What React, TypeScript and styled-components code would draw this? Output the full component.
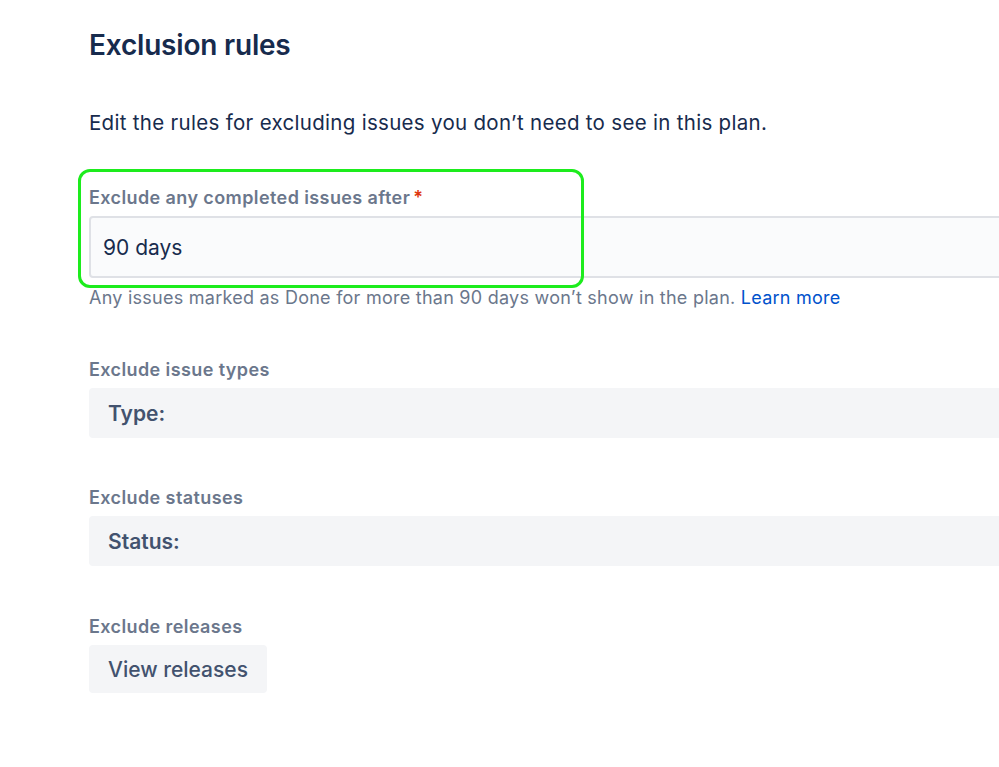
import { FunctionComponent } from "react";
import styled, { createGlobalStyle } from "styled-components";

const GlobalStyle = createGlobalStyle`
  html, body {
    margin: 0;
    padding: 0;
    background: #ffffff;
    overflow: hidden;
  }

  body {
    font-family: Inter, "Noto Sans", "Liberation Sans", sans-serif;
    -webkit-font-smoothing: antialiased;
  }
`;

const Page = styled.div`
  display: flex;
  flex-direction: column;

  width: 1100px;
  padding: 29px 0 0 89px;
`;

const Title = styled.h1`
  margin: 0;

  color: #172b4d;
  font-size: 28px;
  font-weight: 600;
  line-height: 32px;
  letter-spacing: -0.2px;
`;

const Description = styled.p`
  margin: 50px 0 0;

  color: #172b4d;
  font-size: 20.5px;
  line-height: 24px;
  letter-spacing: 0.3px;
`;

const Field = styled.div<{ $gap: number }>`
  position: relative;

  display: flex;
  flex-direction: column;
  gap: 8px;

  margin-top: ${(p) => p.$gap}px;
`;

const Label = styled.label`
  color: #6b778c;
  font-size: 18px;
  font-weight: 600;
  line-height: 20px;
  letter-spacing: 0.4px;
`;

const Required = styled.span`
  margin-left: 3px;

  color: #de350b;
`;

const TextInput = styled.div`
  display: flex;
  align-items: center;

  box-sizing: border-box;
  height: 62px;
  padding: 0 12px;

  background-color: #fafbfc;
  border: 2px solid #dfe1e6;
  border-radius: 4px;

  color: #172b4d;
  font-size: 21px;
`;

const Helper = styled.div`
  margin-top: 10px;

  color: #6b778c;
  font-size: 18px;
  line-height: 20px;
  letter-spacing: 0.25px;
`;

const Link = styled.a`
  color: #0052cc;
  text-decoration: none;
`;

const Highlight = styled.div`
  position: absolute;
  left: -11px;
  top: -19px;

  box-sizing: border-box;
  width: 506px;
  height: 119px;

  border: 3px solid #1dec1d;
  border-radius: 12px;

  pointer-events: none;
`;

const Picker = styled.div`
  display: flex;
  align-items: center;

  height: 50px;
  padding: 0 19px;

  background-color: #f4f5f7;
  border-radius: 4px;

  color: #42526e;
  font-size: 21px;
  font-weight: 600;
`;

const Button = styled.button`
  align-self: flex-start;

  height: 48px;
  padding: 0 19px;

  background-color: #f4f5f7;
  border: none;
  border-radius: 4px;

  color: #42526e;
  font-family: inherit;
  font-size: 21px;
  font-weight: 500;
`;

const App: FunctionComponent = () => {
  return (
    <>
      <GlobalStyle />
      <Page>
        <Title>Exclusion rules</Title>
        <Description>
          Edit the rules for excluding issues you don’t need to see in this
          plan.
        </Description>

        <Field $gap={53}>
          <Highlight />
          <Label>
            Exclude any completed issues after<Required>*</Required>
          </Label>
          <TextInput>90 days</TextInput>
        </Field>
        <Helper>
          Any issues marked as Done for more than 90 days won’t show in the
          plan. <Link href="#">Learn more</Link>
        </Helper>

        <Field $gap={52}>
          <Label>Exclude issue types</Label>
          <Picker>Type:</Picker>
        </Field>

        <Field $gap={50}>
          <Label>Exclude statuses</Label>
          <Picker>Status:</Picker>
        </Field>

        <Field $gap={51}>
          <Label>Exclude releases</Label>
          <Button>View releases</Button>
        </Field>
      </Page>
    </>
  );
};

export default App;
